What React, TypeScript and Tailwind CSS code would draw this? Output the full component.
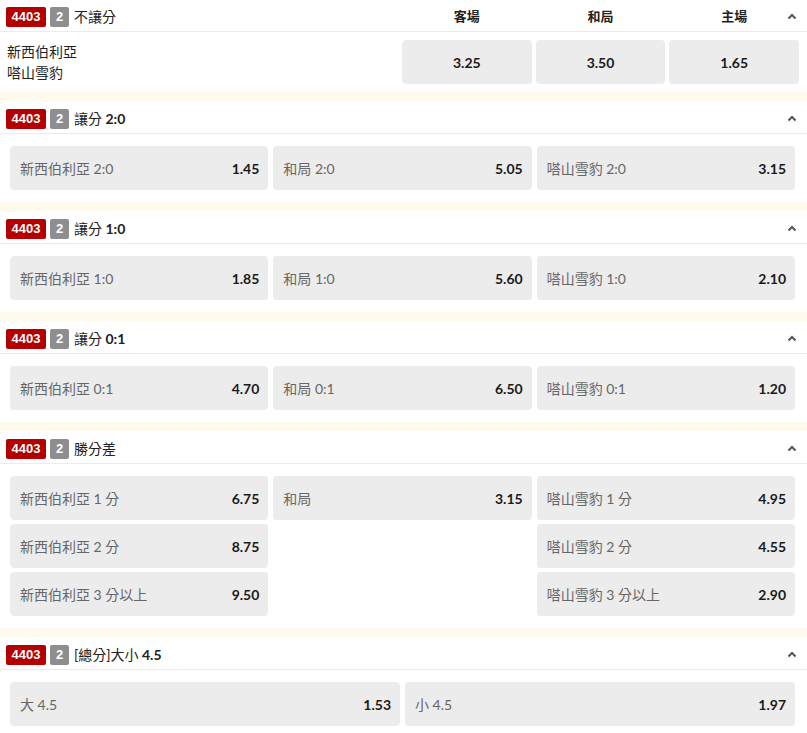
import React from 'react';

const font = { fontFamily: "Lato, 'Noto Sans CJK TC', sans-serif" };

type Odd = { label: string; value: string } | null;

const Chevron = () => (
  <svg width="10" height="7" viewBox="0 0 10 7" className="text-[#555]">
    <polyline points="1.5,5.5 5,2 8.5,5.5" fill="none" stroke="currentColor" strokeWidth="2" />
  </svg>
);

const Badges = () => (
  <div className="flex items-center gap-[4px]">
    <span className="h-5 w-10 rounded-[2px] bg-[#b40000] text-white text-[13px] font-bold flex items-center justify-center [font-family:'Liberation_Sans',sans-serif]">
      4403
    </span>
    <span className="h-5 w-[19px] rounded-[2px] bg-[#8e8e8e] text-white text-[13px] font-bold flex items-center justify-center [font-family:'Liberation_Sans',sans-serif]">
      2
    </span>
  </div>
);

const Header = ({ title, bold }: { title: string; bold?: string }) => (
  <div className="h-[33px] pt-[3px] flex items-center justify-between pl-[6px] pr-[10px] border-b border-[#ebebeb]">
    <div className="flex items-center gap-[5px]">
      <Badges />
      <span className="text-[14px] text-[#222]">
        {title}
        {bold && <span className="font-bold"> {bold}</span>}
      </span>
    </div>
    <Chevron />
  </div>
);

const OddBox = ({ odd }: { odd: Odd }) =>
  odd ? (
    <div className="h-11 rounded-[4px] bg-[#ececec] flex items-center justify-between pl-[10px] pr-[9px]">
      <span className="text-[14px] text-[#666]">{odd.label}</span>
      <span className="text-[14px] font-bold text-[#1a1a1a]">{odd.value}</span>
    </div>
  ) : (
    <div />
  );

const Band = () => <div className="h-[9px] bg-[#fffaee]" />;

const Market = ({ title, bold, cols, odds }: { title: string; bold?: string; cols: number; odds: Odd[] }) => (
  <div>
    <Header title={title} bold={bold} />
    <div className={`pl-[10px] pr-[12px] py-3 grid gap-[5px] gap-y-1 ${cols === 3 ? 'grid-cols-3' : 'grid-cols-2'}`}>
      {odds.map((o, i) => (
        <OddBox key={i} odd={o} />
      ))}
    </div>
  </div>
);

export default function App() {
  return (
    <div className="w-[807px] bg-white text-[#222]" style={font}>
      {/* 不讓分 */}
      <div>
        <div className="relative h-8 pt-[2px] flex items-center pl-[6px] border-b border-[#ebebeb]">
          <div className="flex-1 flex items-center gap-[5px]">
            <Badges />
            <span className="text-[14px]">不讓分</span>
          </div>
          <div className="w-[397px] mr-[8px] grid grid-cols-3 gap-1 text-[13px] font-bold text-center">
            <span>客場</span>
            <span>和局</span>
            <span>主場</span>
          </div>
          <div className="absolute right-[10px] top-0 h-full pt-[2px] flex items-center">
            <Chevron />
          </div>
        </div>
        <div className="flex items-center pl-[7px] pr-[8px] py-2">
          <div className="flex-1 text-[14px] leading-[21px]">
            <div>新西伯利亞</div>
            <div>嗒山雪豹</div>
          </div>
          <div className="w-[397px] grid grid-cols-3 gap-1">
            {['3.25', '3.50', '1.65'].map((v) => (
              <div key={v} className="h-11 rounded-[4px] bg-[#ececec] flex items-center justify-center text-[14px] font-bold text-[#1a1a1a]">
                {v}
              </div>
            ))}
          </div>
        </div>
      </div>
      <Band />
      <Market
        title="讓分"
        bold="2:0"
        cols={3}
        odds={[
          { label: '新西伯利亞 2:0', value: '1.45' },
          { label: '和局 2:0', value: '5.05' },
          { label: '嗒山雪豹 2:0', value: '3.15' },
        ]}
      />
      <Band />
      <Market
        title="讓分"
        bold="1:0"
        cols={3}
        odds={[
          { label: '新西伯利亞 1:0', value: '1.85' },
          { label: '和局 1:0', value: '5.60' },
          { label: '嗒山雪豹 1:0', value: '2.10' },
        ]}
      />
      <Band />
      <Market
        title="讓分"
        bold="0:1"
        cols={3}
        odds={[
          { label: '新西伯利亞 0:1', value: '4.70' },
          { label: '和局 0:1', value: '6.50' },
          { label: '嗒山雪豹 0:1', value: '1.20' },
        ]}
      />
      <Band />
      <Market
        title="勝分差"
        cols={3}
        odds={[
          { label: '新西伯利亞 1 分', value: '6.75' },
          { label: '和局', value: '3.15' },
          { label: '嗒山雪豹 1 分', value: '4.95' },
          { label: '新西伯利亞 2 分', value: '8.75' },
          null,
          { label: '嗒山雪豹 2 分', value: '4.55' },
          { label: '新西伯利亞 3 分以上', value: '9.50' },
          null,
          { label: '嗒山雪豹 3 分以上', value: '2.90' },
        ]}
      />
      <Band />
      <Market
        title="[總分]大小"
        bold="4.5"
        cols={2}
        odds={[
          { label: '大 4.5', value: '1.53' },
          { label: '小 4.5', value: '1.97' },
        ]}
      />
    </div>
  );
}
